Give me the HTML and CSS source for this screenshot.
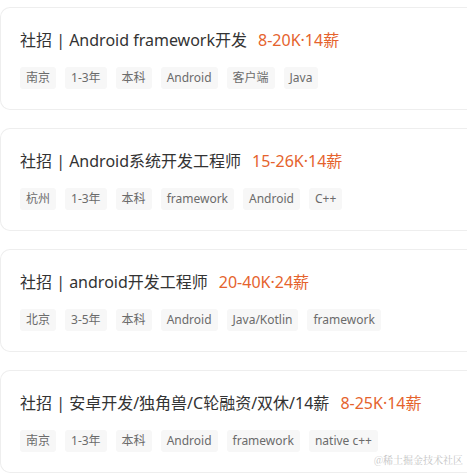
FILE: index.html
```html
<!DOCTYPE html>
<html lang="zh-CN">
<head>
<meta charset="utf-8">
<title>职位列表</title>
<link rel="stylesheet" href="styles.css">
</head>
<body>
<div class="list">
  <div class="card">
    <div class="title"><span class="name">社招 | Android framework开发</span><span class="salary">8-20K·14薪</span></div>
    <div class="tags"><span class="tag">南京</span><span class="tag">1-3年</span><span class="tag">本科</span><span class="tag">Android</span><span class="tag">客户端</span><span class="tag">Java</span></div>
  </div>
  <div class="card">
    <div class="title"><span class="name">社招 | Android系统开发工程师</span><span class="salary">15-26K·14薪</span></div>
    <div class="tags"><span class="tag">杭州</span><span class="tag">1-3年</span><span class="tag">本科</span><span class="tag">framework</span><span class="tag">Android</span><span class="tag">C++</span></div>
  </div>
  <div class="card">
    <div class="title"><span class="name">社招 | android开发工程师</span><span class="salary">20-40K·24薪</span></div>
    <div class="tags"><span class="tag">北京</span><span class="tag">3-5年</span><span class="tag">本科</span><span class="tag">Android</span><span class="tag">Java/Kotlin</span><span class="tag">framework</span></div>
  </div>
  <div class="card">
    <div class="title"><span class="name">社招 | 安卓开发/独角兽/C轮融资/双休/14薪</span><span class="salary">8-25K·14薪</span></div>
    <div class="tags"><span class="tag">南京</span><span class="tag">1-3年</span><span class="tag">本科</span><span class="tag">Android</span><span class="tag">framework</span><span class="tag">native c++</span></div>
  </div>
</div>
<div class="watermark">@稀土掘金技术社区</div>
</body>
</html>
```
FILE: styles.css
```css
html, body {
  margin: 0;
  padding: 0;
  background: #ffffff;
  overflow: hidden;
}
body {
  width: 467px;
  height: 475px;
  position: relative;
  font-family: "Noto Sans", "Noto Sans CJK SC", sans-serif;
}
.list {
  padding-top: 7px;
  display: flex;
  flex-direction: column;
  gap: 18px;
}
.card {
  border: 1px solid #eeeeee;
  border-right: none;
  border-radius: 10px 0 0 10px;
  padding: 20px 0 20px 19px;
  display: flex;
  flex-direction: column;
  gap: 15px;
  box-sizing: border-box;
  height: 103px;
}
.title {
  display: flex;
  align-items: center;
  gap: 11px;
  height: 24px;
  font-size: 16px;
  line-height: 24px;
  white-space: nowrap;
}
.name {
  color: #333333;
}
.salary {
  color: #e5632d;
}
.tags {
  display: flex;
  gap: 9px;
  height: 22px;
}
.tag {
  height: 22px;
  line-height: 22px;
  padding: 0 6px;
  background: #f7f7f7;
  border-radius: 3px;
  font-size: 12px;
  color: #6b6b6b;
  white-space: nowrap;
}
.watermark {
  position: absolute;
  right: 4px;
  bottom: 9px;
  font-family: "Noto Serif CJK SC", "Noto Sans CJK SC", serif;
  font-size: 10px;
  color: #c4c4c4;
  line-height: 12px;
}
```
